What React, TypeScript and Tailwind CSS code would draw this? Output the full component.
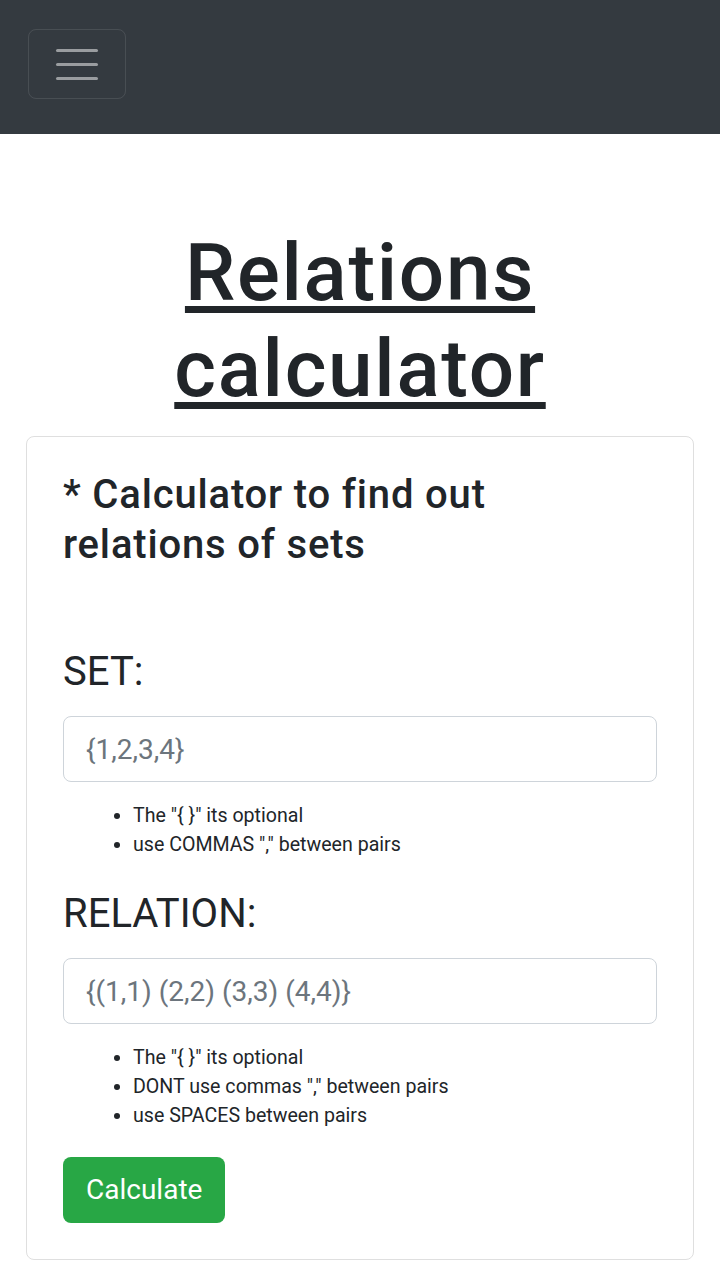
export default function App() {
  const setTips = ['The "{ }" its optional', 'use COMMAS "," between pairs'];
  const relationTips = [
    'The "{ }" its optional',
    'DONT use commas "," between pairs',
    "use SPACES between pairs",
  ];

  return (
    <div className="min-h-[1280px] bg-white font-['Roboto',sans-serif] text-[#212529]">
      <nav className="h-[134px] bg-[#343a40] px-[28px] pt-[29px]">
        <button
          type="button"
          className="flex h-[70px] w-[98px] flex-col items-center justify-center gap-[11px] rounded-[8px] border border-white/10"
        >
          <span className="block h-[3px] w-[42px] rounded-full bg-white/50" />
          <span className="block h-[3px] w-[42px] rounded-full bg-white/50" />
          <span className="block h-[3px] w-[42px] rounded-full bg-white/50" />
        </button>
      </nav>

      <h1 className="mt-[91px] text-center text-[80px] font-medium leading-[96px] tracking-[1.7px] underline decoration-[7px] underline-offset-[6px]">
        Relations
        <br />
        calculator
      </h1>

      <div className="mx-[26px] mt-[19px] rounded-[8px] border border-[#dfdfdf] px-[36px] pb-[36px] pt-[33px]">
        <h5 className="text-[40px] font-medium leading-[50px] tracking-[0.83px]">
          * Calculator to find out
          <br />
          relations of sets
        </h5>

        <label className="mt-[78px] block text-[40px] leading-[48px]">SET:</label>
        <input
          type="text"
          placeholder="{1,2,3,4}"
          className="mt-[20px] block h-[66px] w-full rounded-[8px] border border-[#ced4da] px-[22px] text-[28px] placeholder:text-[#6c757d] focus:outline-none"
        />
        <ul className="mt-[19px] list-disc pl-[70px] text-[19.6px] leading-[29px]">
          {setTips.map((t) => (
            <li key={t}>{t}</li>
          ))}
        </ul>

        <label className="mt-[31px] block text-[40px] leading-[48px]">RELATION:</label>
        <input
          type="text"
          placeholder="{(1,1) (2,2) (3,3) (4,4)}"
          className="mt-[20px] block h-[66px] w-full rounded-[8px] border border-[#ced4da] px-[22px] text-[28px] placeholder:text-[#6c757d] focus:outline-none"
        />
        <ul className="mt-[19px] list-disc pl-[70px] text-[19.6px] leading-[29px]">
          {relationTips.map((t) => (
            <li key={t}>{t}</li>
          ))}
        </ul>

        <button
          type="button"
          className="mt-[27px] h-[66px] rounded-[8px] bg-[#28a745] px-[23px] text-[28px] text-white"
        >
          Calculate
        </button>
      </div>
    </div>
  );
}
